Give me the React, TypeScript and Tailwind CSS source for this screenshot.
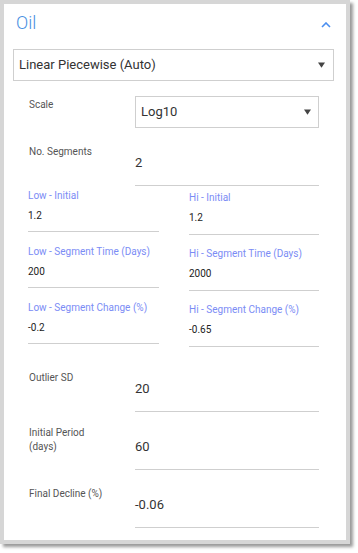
import React from 'react';

const FONT = "font-['Roboto','Liberation_Sans',sans-serif]";

const Caret = () => (
  <svg width="7" height="6" viewBox="0 0 8 6" className="shrink-0">
    <polygon points="0,0 8,0 4,6" fill="#444" />
  </svg>
);

// label on the left, underlined value on the right
const FormRow = ({ label, value, labelTop = 17 }: { label: React.ReactNode; value: string; labelTop?: number }) => (
  <div className="flex items-start">
    <div
      className={`w-[106px] text-[10px] leading-[14px] text-[#555] ${labelTop === 14 ? 'mt-[14px]' : 'mt-[17px]'}`}
    >
      {label}
    </div>
    <div className="w-[184px] border-b border-[#cfcfcf] pt-[25px] pb-[12px] text-[13px] leading-[20px] text-[#333]">
      {value}
    </div>
  </div>
);

// blue label stacked over a small value
const StackField = ({ label, value, pb }: { label: string; value: string; pb: string }) => (
  <div className={`border-b border-[#cfcfcf] ${pb}`}>
    <div className="text-[10px] leading-[14px] text-[#7b8cf5] whitespace-nowrap">{label}</div>
    <div className="mt-[6px] text-[10px] leading-[14px] text-[#222]">{value}</div>
  </div>
);

const App = () => {
  return (
    <div className={`w-[358px] h-[553px] bg-white ${FONT}`}>
      <div className="w-[350px] h-[544px] border-4 border-[#d6d6d6] bg-white shadow-[3px_3px_3px_rgba(0,0,0,0.4)]">
        {/* Header */}
        <div className="flex items-center justify-between pl-[12px] pr-[15px] pt-[7px]">
          <span className="text-[18px] leading-[24px] font-light text-[#4a90e2]">Oil</span>
          <svg width="10" height="6" viewBox="0 0 10 6" className="mt-[4px]">
            <polyline points="1,5 5,1 9,5" fill="none" stroke="#4a8ef0" strokeWidth="1.6" />
          </svg>
        </div>

        {/* Model select */}
        <div className="ml-[9px] mr-[12px] mt-[14px] h-[32px] border border-[#cfcfcf] flex items-center justify-between pl-[5px] pr-[8px]">
          <span className="text-[13px] text-[#333]">Linear Piecewise (Auto)</span>
          <Caret />
        </div>

        <div className="pl-[25px] pr-[27px]">
          {/* Scale */}
          <div className="flex items-start mt-[15px]">
            <div className="w-[106px] mt-[2px] text-[10px] leading-[14px] text-[#555]">Scale</div>
            <div className="w-[184px] h-[32px] border border-[#cfcfcf] flex items-center justify-between pl-[5px] pr-[7px]">
              <span className="text-[13px] text-[#333]">Log10</span>
              <Caret />
            </div>
          </div>

          <FormRow label="No. Segments" value="2" />

          {/* Low / Hi grid */}
          <div className="flex gap-[30px] mt-[3px] -ml-[1px]">
            <div className="w-[131px] flex flex-col gap-[13px]">
              <StackField label="Low - Initial" value="1.2" pb="pb-[8px]" />
              <StackField label="Low - Segment Time (Days)" value="200" pb="pb-[8px]" />
              <StackField label="Low - Segment Change (%)" value="-0.2" pb="pb-[8px]" />
            </div>
            <div className="w-[130px] flex flex-col gap-[12px] mt-[2px]">
              <StackField label="Hi - Initial" value="1.2" pb="pb-[9px]" />
              <StackField label="Hi - Segment Time (Days)" value="2000" pb="pb-[9px]" />
              <StackField label="Hi - Segment Change (%)" value="-0.65" pb="pb-[9px]" />
            </div>
          </div>

          <div className="mt-[7px]">
            <FormRow label="Outlier SD" value="20" />
            <FormRow
              label={
                <>
                  Initial Period
                  <br />
                  (days)
                </>
              }
              value="60"
              labelTop={14}
            />
            <FormRow label="Final Decline (%)" value="-0.06" />
          </div>
        </div>
      </div>
    </div>
  );
};

export default App;
